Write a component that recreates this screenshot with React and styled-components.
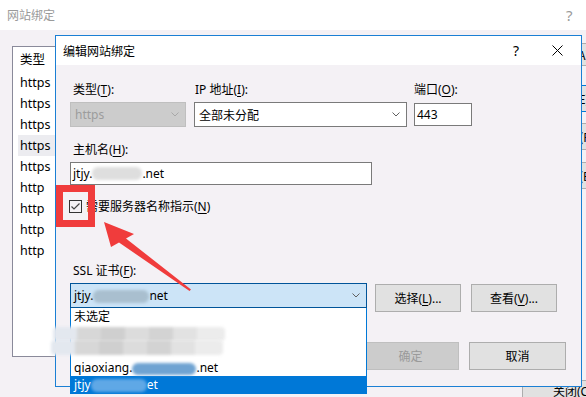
import React from "react";
import styled, { createGlobalStyle } from "styled-components";

const GlobalStyle = createGlobalStyle`
  html, body { margin: 0; padding: 0; }
  body {
    background: #f4f1f5;
    font-family: "Noto Sans", "Noto Sans CJK SC", sans-serif;
    font-size: 12px;
    color: #000;
  }
  #root { width: 586px; height: 397px; }
  u { text-decoration-thickness: 1px; text-underline-offset: 2px; }
`;

const Screen = styled.div`
  position: relative;
  width: 586px;
  height: 397px;
  overflow: hidden;
  background: #f4f1f5;
`;

/* ---------- background window ---------- */
const BackWindow = styled.div`
  display: flex;
  flex-direction: column;
  width: 620px;
  height: 420px;
`;

const BackTitleBar = styled.div`
  height: 30px;
  flex: none;
  box-sizing: border-box;
  background: #fff;
  display: flex;
  align-items: center;
  padding: 0 0 0 7px;
  color: #9a9a9a;
  font-family: "Noto Sans CJK SC", sans-serif;
`;

const BackTitle = styled.span`
  font-size: 12px;
  line-height: 16px;
`;

const BackHelp = styled.span`
  margin-left: 511px;
  font-family: "Noto Sans", sans-serif;
  font-size: 15px;
`;

const BackBody = styled.div`
  display: grid;
  grid-template-columns: 1fr 90px;
  grid-template-rows: 311px auto;
  column-gap: 24px;
  padding: 16px 0 0 12px;
`;

const ListBox = styled.div`
  box-sizing: border-box;
  border: 1px solid #8a8a9a;
  background: #fff;
  padding-top: 2px;
`;

const ListRow = styled.div`
  height: 21px;
  line-height: 21px;
  margin-left: 5px;
  padding-left: 2px;
  margin-bottom: ${(p) => (p.$header ? 2 : 0)}px;
  background: ${(p) => (p.$hover ? "#ececf0" : "transparent")};
  font-size: 12.5px;
`;

const BackButtons = styled.div`
  display: flex;
  flex-direction: column;
  margin-top: -3px;
`;

const BackButton = styled.div`
  box-sizing: border-box;
  height: ${(p) => p.$h}px;
  margin-top: ${(p) => p.$mt}px;
  border: 1px solid ${(p) => (p.$focus ? "#0078d7" : "#adadad")};
  background: #e1e1e1;
  display: flex;
  align-items: center;
  justify-content: center;
  font-family: "Noto Sans CJK SC", sans-serif;
`;

const BackBottom = styled.div`
  grid-column: 1 / 3;
  display: flex;
  justify-content: flex-end;
  margin-top: 23px;
`;

const CloseButton = styled.div`
  box-sizing: border-box;
  width: 98px;
  height: 26px;
  border: 1px solid #adadad;
  background: #e1e1e1;
  padding-left: 30px;
  padding-top: 3px;
  line-height: 16px;
`;

/* ---------- front dialog ---------- */
const Dialog = styled.div`
  position: absolute;
  left: 55px;
  top: 35px;
  width: 527px;
  height: 352px;
  box-sizing: border-box;
  border: 1px solid #1a7fd4;
  background: #f4f1f5;
  display: flex;
  flex-direction: column;
`;

const TitleBar = styled.div`
  height: 29px;
  flex: none;
  background: #fff;
  display: flex;
  align-items: center;
  padding-left: 7px;
`;

const Title = styled.span`
  font-family: "Noto Sans CJK SC", sans-serif;
  font-size: 12px;
  line-height: 16px;
`;

const TitleControls = styled.div`
  margin-left: auto;
  display: flex;
  align-items: center;
  margin-right: 18px;
`;

const HelpGlyph = styled.span`
  font-size: 14px;
  line-height: 16px;
  margin-right: 33px;
`;

const DialogBody = styled.div`
  flex: 1;
  display: flex;
  flex-direction: column;
  padding-left: 14px;
`;

const FieldRow = styled.div`
  display: flex;
  align-items: flex-start;
  margin-top: ${(p) => p.$mt || 0}px;
  justify-content: ${(p) => (p.$end ? "flex-end" : "flex-start")};
  margin-right: ${(p) => (p.$end ? 15 : 0)}px;
`;

const FieldCol = styled.div`
  display: flex;
  flex-direction: column;
  gap: 4px;
  width: ${(p) => p.$w}px;
  margin-left: ${(p) => p.$ml || 0}px;
`;

const Label = styled.div`
  line-height: 16px;
  padding-left: ${(p) => p.$indent ?? 3}px;
  margin-top: ${(p) => p.$mt || 0}px;
  white-space: nowrap;
`;

const Select = styled.div`
  box-sizing: border-box;
  height: 25px;
  border: 1px solid ${(p) => (p.$disabled ? "#bfbfbf" : "#7a7a7a")};
  background: ${(p) => (p.$disabled ? "#cccccc" : "#fff")};
  color: ${(p) => (p.$disabled ? "#9c9c9c" : "#000")};
  display: flex;
  align-items: center;
  justify-content: space-between;
  padding: 0 6px 0 4px;
  white-space: nowrap;
`;

const TextInput = styled.div`
  box-sizing: border-box;
  width: ${(p) => (p.$w ? `${p.$w}px` : "auto")};
  height: 23px;
  margin-top: ${(p) => p.$mt || 0}px;
  border: 1px solid #7a7a7a;
  background: #fff;
  display: flex;
  align-items: center;
  padding-left: 2px;
  white-space: nowrap;
`;

const Blob = styled.span`
  display: inline-block;
  width: ${(p) => p.$w}px;
  height: ${(p) => p.$h || 13}px;
  background: ${(p) => p.$c};
  border-radius: 6px;
  filter: blur(1.5px);
  vertical-align: middle;
  margin: 0 ${(p) => p.$mx ?? 0}px;
`;

const CheckRow = styled.div`
  display: flex;
  align-items: center;
  height: 16px;
  margin-top: 13px;
  margin-left: -1px;
  gap: 4px;
`;

const CheckBox = styled.div`
  width: 13px;
  height: 13px;
  box-sizing: border-box;
  border: 1px solid #333;
  display: flex;
  align-items: center;
  justify-content: center;
`;

const ComboWrap = styled.div`
  position: relative;
  width: 297px;
`;

const Combo = styled.div`
  box-sizing: border-box;
  height: 25px;
  border: 1px solid #005499;
  background: #cce4f7;
  display: flex;
  align-items: center;
  justify-content: space-between;
  padding: 0 6px 0 3px;
  white-space: nowrap;
`;

const DropList = styled.div`
  position: absolute;
  left: 0;
  top: 25px;
  width: 297px;
  height: 86px;
  box-sizing: border-box;
  border: 1px solid #0078d7;
  border-top: none;
  background: #fff;
  z-index: 3;
`;

const DropItem = styled.div`
  height: 17px;
  line-height: 17px;
  padding-left: 3px;
  white-space: nowrap;
  background: ${(p) => (p.$selected ? "#0078d7" : "transparent")};
  color: ${(p) => (p.$selected ? "#fff" : "#000")};
`;

const Mosaic = styled.div`
  position: absolute;
  left: ${(p) => p.$l}px;
  top: ${(p) => p.$t}px;
  width: ${(p) => p.$w}px;
  height: ${(p) => p.$h}px;
  background: linear-gradient(
    90deg,
    #e3e8ef 0 14%,
    #d7d7d7 14% 28%,
    #cfcfcf 28% 42%,
    #dcdcdc 42% 56%,
    #d3d3d3 56% 70%,
    #e2e2e2 70% 84%,
    #ececec 84% 100%
  );
  filter: blur(1.5px);
  border-radius: 4px;
`;

const Button = styled.div`
  box-sizing: border-box;
  width: ${(p) => p.$w}px;
  height: 28px;
  margin-left: ${(p) => p.$ml || 0}px;
  margin-top: ${(p) => p.$mt || 0}px;
  border: 1px solid ${(p) => (p.$disabled ? "#bfbfbf" : "#adadad")};
  background: ${(p) => (p.$disabled ? "#cccccc" : "#e1e1e1")};
  color: ${(p) => (p.$disabled ? "#9a9a9a" : "#000")};
  display: flex;
  align-items: center;
  justify-content: center;
  white-space: nowrap;
`;

/* ---------- annotation ---------- */
const RedBox = styled.div`
  position: absolute;
  left: 56px;
  top: 185px;
  width: 39px;
  height: 42px;
  box-sizing: border-box;
  border: 7px solid #f03c3c;
  z-index: 5;
`;

const ArrowLayer = styled.svg`
  position: absolute;
  left: 0;
  top: 0;
  z-index: 5;
  pointer-events: none;
`;

const Chevron = ({ color = "#606060" }) => (
  <svg width="8" height="5" viewBox="0 0 8 5">
    <polyline points="0.5,0.5 4,4 7.5,0.5" fill="none" stroke={color} strokeWidth="1" />
  </svg>
);

const CloseX = () => (
  <svg width="11" height="11" viewBox="0 0 11 11">
    <path d="M0.5 0.5 L10.5 10.5 M10.5 0.5 L0.5 10.5" stroke="#000" strokeWidth="1" />
  </svg>
);

const Check = () => (
  <svg width="11" height="11" viewBox="0 0 11 11">
    <polyline points="1.5,5.5 4,8 9.5,2.5" fill="none" stroke="#444" strokeWidth="1.2" />
  </svg>
);

const rows = ["https", "https", "https", "https", "https", "http", "http", "http", "http"];

export default function App() {
  return (
    <Screen>
      <GlobalStyle />
      <BackWindow>
        <BackTitleBar>
          <BackTitle>网站绑定</BackTitle>
          <BackHelp>?</BackHelp>
        </BackTitleBar>
        <BackBody>
          <ListBox>
            <ListRow $header>类型</ListRow>
            {rows.map((r, i) => (
              <ListRow key={i} $hover={i === 3}>
                {r}
              </ListRow>
            ))}
          </ListBox>
          <BackButtons>
            <BackButton $h={23} $mt={0}>添加(A)...</BackButton>
            <BackButton $h={27} $mt={19} $focus>编辑(E)...</BackButton>
            <BackButton $h={27} $mt={11}>删除(R)</BackButton>
            <BackButton $h={27} $mt={12}>浏览(B)</BackButton>
          </BackButtons>
          <BackBottom>
            <CloseButton>
              关闭(<u>C</u>)
            </CloseButton>
          </BackBottom>
        </BackBody>
      </BackWindow>

      <Dialog>
        <TitleBar>
          <Title>编辑网站绑定</Title>
          <TitleControls>
            <HelpGlyph>?</HelpGlyph>
            <CloseX />
          </TitleControls>
        </TitleBar>
        <DialogBody>
          <FieldRow $mt={17}>
            <FieldCol $w={116}>
              <Label>
                类型(<u>T</u>):
              </Label>
              <Select $disabled>
                https
                <Chevron color="#a8a8a8" />
              </Select>
            </FieldCol>
            <FieldCol $w={213} $ml={8}>
              <Label $indent={1}>
                IP 地址(<u>I</u>):
              </Label>
              <Select>
                全部未分配
                <Chevron />
              </Select>
            </FieldCol>
            <FieldCol $w={58} $ml={7}>
              <Label $indent={0}>
                端口(<u>O</u>):
              </Label>
              <TextInput $mt={1}>443</TextInput>
            </FieldCol>
          </FieldRow>

          <FieldCol $w={302}>
            <Label $mt={15}>
              主机名(<u>H</u>):
            </Label>
            <TextInput>
              jtjy.
              <Blob $w={50} $c="#dedede" />
              .net
            </TextInput>
          </FieldCol>

          <CheckRow>
            <CheckBox>
              <Check />
            </CheckBox>
            <span>
              需要服务器名称指示(<u>N</u>)
            </span>
          </CheckRow>

          <Label $mt={49}>
            SSL 证书(<u>F</u>):
          </Label>
          <FieldRow $mt={4}>
            <ComboWrap>
              <Combo>
                <span>
                  jtjy.
                  <Blob $w={56} $c="#a9bfcf" />
                  net
                </span>
                <Chevron />
              </Combo>
              <DropList>
                <DropItem>未选定</DropItem>
                <DropItem />
                <DropItem />
                <DropItem>
                  qiaoxiang.
                  <Blob $w={64} $h={12} $c="#6fa3d2" />
                  .net
                </DropItem>
                <DropItem $selected>
                  jtjy
                  <Blob $w={56} $h={13} $c="#5fa8e6" />
                  et
                </DropItem>
                <Mosaic $l={-18} $t={19} $w={172} $h={14} />
                <Mosaic $l={-20} $t={32} $w={172} $h={15} />
              </DropList>
            </ComboWrap>
            <Button $w={86} $ml={8} $mt={1}>
              选择(<u>L</u>)...
            </Button>
            <Button $w={86} $ml={10} $mt={1}>
              查看(<u>V</u>)...
            </Button>
          </FieldRow>

          <FieldRow $mt={30} $end>
            <Button $w={97} $disabled>
              确定
            </Button>
            <Button $w={97} $ml={10}>
              取消
            </Button>
          </FieldRow>
        </DialogBody>
      </Dialog>

      <RedBox />
      <ArrowLayer width="586" height="397" viewBox="0 0 586 397">
        <polygon
          points="104,222 134,234 126,238.5 191,289.5 189.5,291 119,242.5 111,247"
          fill="#f03c3c"
        />
      </ArrowLayer>
    </Screen>
  );
}
